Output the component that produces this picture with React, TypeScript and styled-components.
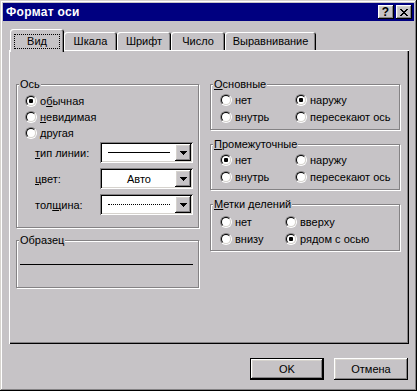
import styled, { createGlobalStyle } from "styled-components";

const FACE = "#c6c3c6";
const SHADOW = "#848284";
const LIGHT = "#d6d3ce";

const raised = `box-shadow: inset -1px -1px #000, inset 1px 1px #fff, inset -2px -2px ${SHADOW}, inset 2px 2px ${LIGHT};`;

const Global = createGlobalStyle`
  html, body { margin: 0; padding: 0; background: ${FACE}; }
  body {
    font-family: "Liberation Sans", Arial, sans-serif;
    font-size: 11px;
    color: #000;
  }
`;

const Window = styled.div`
  width: 417px;
  height: 391px;
  box-sizing: border-box;
  padding: 3px;
  background: ${FACE};
  box-shadow: inset -1px -1px #000, inset 1px 1px ${LIGHT}, inset -2px -2px ${SHADOW}, inset 2px 2px #fff;
  display: flex;
  flex-direction: column;
`;

const TitleBar = styled.div`
  height: 18px;
  background: #000080;
  display: flex;
  align-items: center;
  justify-content: space-between;
  padding: 0 2px 0 3px;
`;

const Title = styled.span`
  color: #fff;
  font-weight: bold;
  font-size: 12px;
  letter-spacing: 0.3px;
`;

const TitleButtons = styled.div`
  display: flex;
  gap: 2px;
`;

const TitleButton = styled.div`
  width: 16px;
  height: 14px;
  box-sizing: border-box;
  background: ${FACE};
  ${raised}
  display: flex;
  align-items: center;
  justify-content: center;
  font-weight: bold;
  font-size: 12px;
  line-height: 14px;
  padding-right: 1px;
`;

const Body = styled.div`
  flex: 1;
  display: flex;
  flex-direction: column;
  padding: 8px 5px 0 6px;
`;

const TabStrip = styled.div`
  height: 21px;
  display: flex;
  align-items: flex-end;
  padding-left: 1px;
`;

const Tab = styled.div<{ $w: number; $active?: boolean }>`
  flex: none;
  width: ${(p) => p.$w}px;
  height: ${(p) => (p.$active ? 23 : 18)}px;
  margin-bottom: ${(p) => (p.$active ? -2 : 0)}px;
  box-sizing: border-box;
  padding-top: ${(p) => (p.$active ? 5 : 3)}px;
  background: ${FACE};
  border-radius: 3px 3px 0 0;
  box-shadow: inset 1px 1px #fff, inset -1px 0 #000, inset -2px 0 ${SHADOW};
  display: flex;
  justify-content: center;
  align-items: flex-start;
  line-height: 13px;
  position: relative;
  z-index: ${(p) => (p.$active ? 1 : 0)};
`;

const FocusBox = styled.span`
  width: 46px;
  height: 15px;
  box-sizing: border-box;
  border: 1px dotted #000;
  display: flex;
  align-items: center;
  justify-content: center;
`;

const Panel = styled.div`
  width: 400px;
  height: 294px;
  box-sizing: border-box;
  padding: 28px 0 0 7px;
  box-shadow: inset 1px 1px #fff, inset -1px -1px #000, inset -2px -2px ${SHADOW};
  display: grid;
  grid-template-columns: 183px 190px;
  column-gap: 11px;
  align-items: start;
`;

const Column = styled.div<{ $gap: number }>`
  display: flex;
  flex-direction: column;
  gap: ${(p) => p.$gap}px;
`;

const Group = styled.fieldset<{ $h: number }>`
  margin: 0;
  padding: 0;
  min-width: 0;
  height: ${(p) => p.$h}px;
  box-sizing: border-box;
  border: 1px solid ${SHADOW};
  box-shadow: inset 1px 1px #fff, 1px 1px #fff;
`;

const Caption = styled.legend`
  margin-left: 2px;
  padding: 0 1px;
  line-height: 12px;
  background: ${FACE};
`;

const U = styled.span`
  text-decoration: underline;
`;

const GroupBody = styled.div<{ $pt: number; $pl: number }>`
  padding: ${(p) => p.$pt}px 0 0 ${(p) => p.$pl}px;
`;

const RadioGrid = styled.div<{ $col: number }>`
  display: grid;
  grid-template-columns: ${(p) => p.$col}px auto;
  grid-auto-rows: 17px;
`;

const RadioRow = styled.label`
  display: flex;
  align-items: center;
  gap: 3px;
  height: 16px;
  white-space: nowrap;
`;

const RadioMark = styled.span<{ $on?: boolean }>`
  flex: none;
  width: 12px;
  height: 12px;
  box-sizing: border-box;
  border-radius: 50%;
  border: 1px solid;
  border-color: ${SHADOW} #fff #fff ${SHADOW};
  display: flex;
  align-items: center;
  justify-content: center;
  &::before {
    content: "";
    width: 10px;
    height: 10px;
    box-sizing: border-box;
    border-radius: 50%;
    border: 1px solid;
    border-color: #000 ${LIGHT} ${LIGHT} #000;
    background: ${(p) =>
      p.$on ? "radial-gradient(circle, #000 0 2px, #fff 2.5px)" : "#fff"};
  }
`;

const FieldRows = styled.div`
  display: flex;
  flex-direction: column;
  gap: 5px;
  margin-top: 1px;
  padding-left: 10px;
`;

const FieldRow = styled.div`
  display: flex;
  align-items: center;
  height: 21px;
`;

const FieldLabel = styled.span`
  width: 65px;
`;

const Combo = styled.div`
  width: 93px;
  height: 21px;
  box-sizing: border-box;
  padding: 2px;
  background: #fff;
  box-shadow: inset 1px 1px ${SHADOW}, inset -1px -1px #fff, inset 2px 2px #000, inset -2px -2px ${LIGHT};
  display: flex;
`;

const ComboValue = styled.div`
  flex: 1;
  display: flex;
  align-items: center;
  justify-content: center;
  padding: 0 3px 0 4px;
`;

const DropButton = styled.div`
  flex: none;
  width: 16px;
  background: ${FACE};
  ${raised}
  display: flex;
  align-items: center;
  justify-content: center;
`;

const LineSample = styled.div<{ $dotted?: boolean }>`
  width: 62px;
  height: 0;
  border-top: 1px ${(p) => (p.$dotted ? "dotted" : "solid")} #000;
`;

const SampleLine = styled.div`
  height: 1px;
  background: #000;
  margin: 18px 5px 0 3px;
`;

const Footer = styled.div`
  display: flex;
  justify-content: flex-end;
  gap: 10px;
  margin-top: 14px;
  padding-right: 1px;
`;

const Button = styled.button<{ $default?: boolean }>`
  width: 74px;
  height: 22px;
  box-sizing: border-box;
  padding: 0;
  font: inherit;
  color: #000;
  background: ${FACE};
  border: ${(p) => (p.$default ? "1px solid #000" : "none")};
  ${raised}
`;

const Arrow = () => (
  <svg width="7" height="4" viewBox="0 0 7 4" shapeRendering="crispEdges">
    <rect x="0" y="0" width="7" height="1" fill="#000" />
    <rect x="1" y="1" width="5" height="1" fill="#000" />
    <rect x="2" y="2" width="3" height="1" fill="#000" />
    <rect x="3" y="3" width="1" height="1" fill="#000" />
  </svg>
);

const CloseGlyph = () => (
  <svg width="8" height="7" viewBox="0 0 8 7" shapeRendering="crispEdges">
    {[
      [0, 0], [6, 0], [1, 1], [5, 1], [2, 2], [4, 2], [3, 3],
      [2, 4], [4, 4], [1, 5], [5, 5], [0, 6], [6, 6],
    ].map(([x, y], i) => (
      <rect key={i} x={x} y={y} width="2" height="1" fill="#000" />
    ))}
  </svg>
);

const Radio = ({ on, children }: { on?: boolean; children: React.ReactNode }) => (
  <RadioRow>
    <RadioMark $on={on} />
    <span>{children}</span>
  </RadioRow>
);

const tabs = [
  { title: "Вид", w: 54, active: true },
  { title: "Шкала", w: 53 },
  { title: "Шрифт", w: 54 },
  { title: "Число", w: 54 },
  { title: "Выравнивание", w: 91 },
];

type TickGroup = {
  caption: string;
  h: number;
  pt: number;
  col: number;
  items: { label: string; on?: boolean }[];
};

const tickGroups: TickGroup[] = [
  {
    caption: "Основные",
    h: 52,
    pt: 2,
    col: 75,
    items: [{ label: "нет" }, { label: "наружу", on: true }, { label: "внутрь" }, { label: "пересекают ось" }],
  },
  {
    caption: "Промежуточные",
    h: 52,
    pt: 2,
    col: 75,
    items: [{ label: "нет", on: true }, { label: "наружу" }, { label: "внутрь" }, { label: "пересекают ось" }],
  },
  {
    caption: "Метки делений",
    h: 53,
    pt: 4,
    col: 65,
    items: [{ label: "нет" }, { label: "вверху" }, { label: "внизу" }, { label: "рядом с осью", on: true }],
  },
];

export default function App() {
  return (
    <>
      <Global />
      <Window>
        <TitleBar>
          <Title>Формат оси</Title>
          <TitleButtons>
            <TitleButton>?</TitleButton>
            <TitleButton>
              <CloseGlyph />
            </TitleButton>
          </TitleButtons>
        </TitleBar>
        <Body>
          <TabStrip>
            {tabs.map((t) => (
              <Tab key={t.title} $w={t.w} $active={t.active}>
                {t.active ? <FocusBox>{t.title}</FocusBox> : t.title}
              </Tab>
            ))}
          </TabStrip>
          <Panel>
            <Column $gap={6}>
              <Group $h={150}>
                <Caption>Ось</Caption>
                <GroupBody $pt={3} $pl={8}>
                  <Radio on>
                    о<U>б</U>ычная
                  </Radio>
                  <Radio>
                    <U>н</U>евидимая
                  </Radio>
                  <Radio>другая</Radio>
                  <FieldRows>
                    <FieldRow>
                      <FieldLabel>
                        <U>т</U>ип линии:
                      </FieldLabel>
                      <Combo>
                        <ComboValue>
                          <LineSample />
                        </ComboValue>
                        <DropButton>
                          <Arrow />
                        </DropButton>
                      </Combo>
                    </FieldRow>
                    <FieldRow>
                      <FieldLabel>
                        <U>ц</U>вет:
                      </FieldLabel>
                      <Combo>
                        <ComboValue>Авто</ComboValue>
                        <DropButton>
                          <Arrow />
                        </DropButton>
                      </Combo>
                    </FieldRow>
                    <FieldRow>
                      <FieldLabel>
                        тол<U>щ</U>ина:
                      </FieldLabel>
                      <Combo>
                        <ComboValue>
                          <LineSample $dotted />
                        </ComboValue>
                        <DropButton>
                          <Arrow />
                        </DropButton>
                      </Combo>
                    </FieldRow>
                  </FieldRows>
                </GroupBody>
              </Group>
              <Group $h={54}>
                <Caption>Образец</Caption>
                <SampleLine />
              </Group>
            </Column>
            <Column $gap={8}>
              {tickGroups.map((g) => (
                <Group key={g.caption} $h={g.h}>
                  <Caption>
                    <U>{g.caption[0]}</U>
                    {g.caption.slice(1)}
                  </Caption>
                  <GroupBody $pt={g.pt} $pl={9}>
                    <RadioGrid $col={g.col}>
                      {g.items.map((it) => (
                        <Radio key={it.label} on={it.on}>
                          {it.label}
                        </Radio>
                      ))}
                    </RadioGrid>
                  </GroupBody>
                </Group>
              ))}
            </Column>
          </Panel>
          <Footer>
            <Button $default>OK</Button>
            <Button>Отмена</Button>
          </Footer>
        </Body>
      </Window>
    </>
  );
}
